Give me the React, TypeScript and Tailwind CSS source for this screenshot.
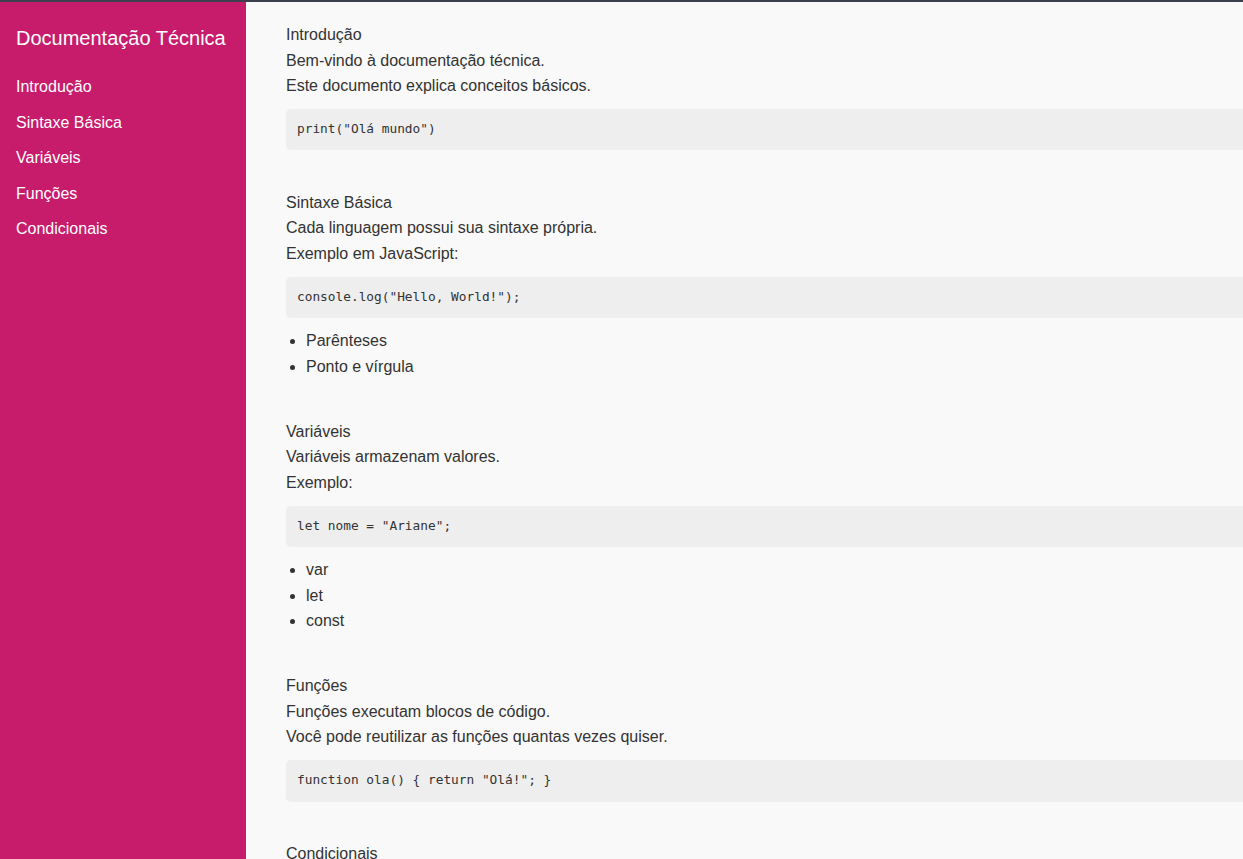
const nav = ["Introdução", "Sintaxe Básica", "Variáveis", "Funções", "Condicionais"];

type Section = {
  title: string;
  lines: string[];
  code?: string;
  items?: string[];
};

const sections: Section[] = [
  {
    title: "Introdução",
    lines: ["Bem-vindo à documentação técnica.", "Este documento explica conceitos básicos."],
    code: 'print("Olá mundo")',
  },
  {
    title: "Sintaxe Básica",
    lines: ["Cada linguagem possui sua sintaxe própria.", "Exemplo em JavaScript:"],
    code: 'console.log("Hello, World!");',
    items: ["Parênteses", "Ponto e vírgula"],
  },
  {
    title: "Variáveis",
    lines: ["Variáveis armazenam valores.", "Exemplo:"],
    code: 'let nome = "Ariane";',
    items: ["var", "let", "const"],
  },
  {
    title: "Funções",
    lines: ["Funções executam blocos de código.", "Você pode reutilizar as funções quantas vezes quiser."],
    code: 'function ola() { return "Olá!"; }',
  },
  {
    title: "Condicionais",
    lines: ["Use if e else para tomar decisões.", "Exemplo:"],
    code: 'if (idade >= 18) { console.log("Maior de idade"); }',
  },
];

export default function App() {
  return (
    <div className="h-[859px] overflow-hidden bg-[#f9f9f9] font-['Liberation_Sans',Arial,sans-serif] text-[#333]">
      <div className="h-[2px] bg-[#3b3f4e]" />
      <div className="flex">
        {/* Sidebar */}
        <nav className="w-[246px] shrink-0 h-[857px] bg-[#c71c6c] px-4 pt-[20px] text-white">
          <h1 className="text-[20px] leading-[32px] font-normal">Documentação Técnica</h1>
          <ul className="mt-[20px]">
            {nav.map((item) => (
              <li key={item} className="text-[16px] leading-[25.6px] pb-[10px]">
                {item}
              </li>
            ))}
          </ul>
        </nav>

        {/* Main content */}
        <main className="flex-1 pl-10 pt-5">
          {sections.map((s) => (
            <section key={s.title} className="mb-[39.5px] text-[16px] leading-[25.6px]">
              <h2 className="font-normal">{s.title}</h2>
              {s.lines.map((l) => (
                <p key={l}>{l}</p>
              ))}
              {s.code && (
                <pre className="mt-[10px] rounded-l-[5px] bg-[#eeeeee] px-[11px] py-[10px] text-[12.8px] leading-[20.48px] text-[#333]">
                  <code className="font-['DejaVu_Sans_Mono',monospace] text-[12.8px]">{s.code}</code>
                </pre>
              )}
              {s.items && (
                <ul className="mt-[10px] list-disc pl-5">
                  {s.items.map((i) => (
                    <li key={i}>{i}</li>
                  ))}
                </ul>
              )}
            </section>
          ))}
        </main>
      </div>
    </div>
  );
}
